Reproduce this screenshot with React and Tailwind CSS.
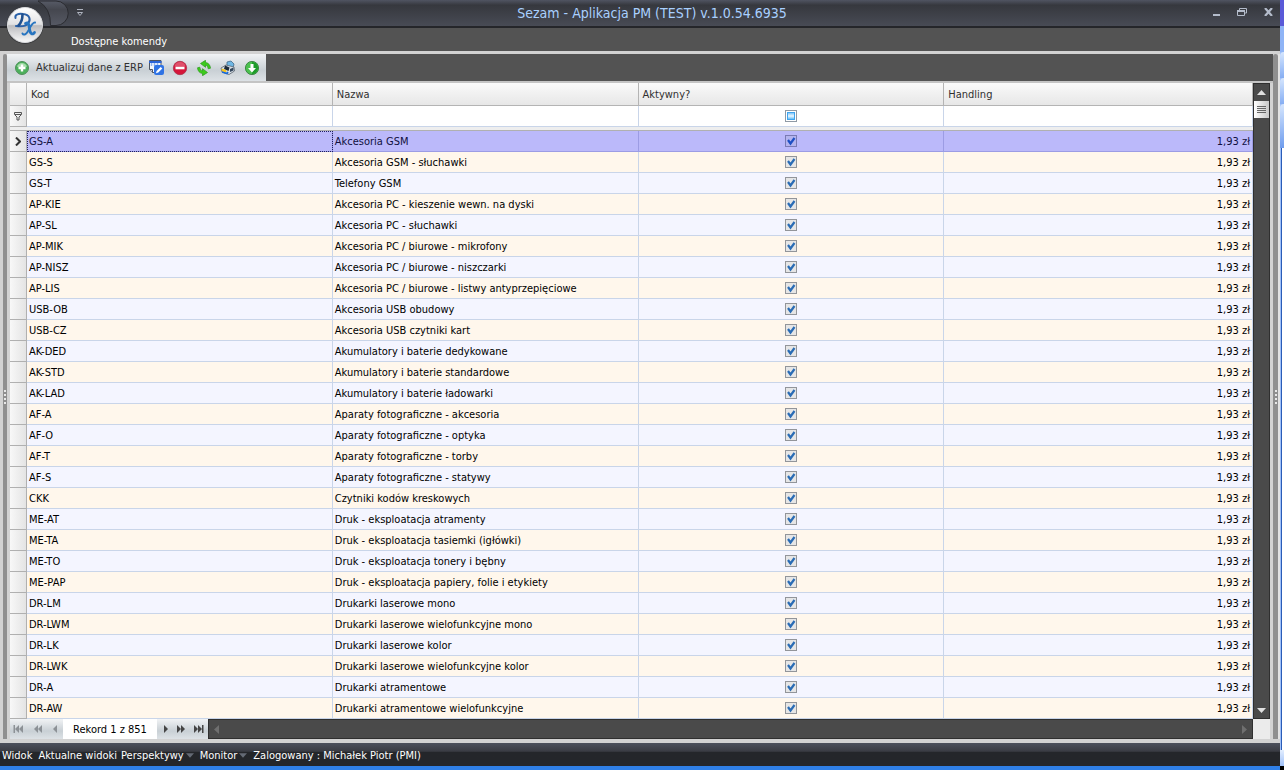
import React from 'react';

const rows = [
  ['GS-A', 'Akcesoria GSM'],
  ['GS-S', 'Akcesoria GSM - słuchawki'],
  ['GS-T', 'Telefony GSM'],
  ['AP-KIE', 'Akcesoria PC - kieszenie wewn. na dyski'],
  ['AP-SL', 'Akcesoria PC - słuchawki'],
  ['AP-MIK', 'Akcesoria PC / biurowe - mikrofony'],
  ['AP-NISZ', 'Akcesoria PC / biurowe - niszczarki'],
  ['AP-LIS', 'Akcesoria PC / biurowe - listwy antyprzepięciowe'],
  ['USB-OB', 'Akcesoria USB obudowy'],
  ['USB-CZ', 'Akcesoria USB czytniki kart'],
  ['AK-DED', 'Akumulatory i baterie dedykowane'],
  ['AK-STD', 'Akumulatory i baterie standardowe'],
  ['AK-LAD', 'Akumulatory i baterie ładowarki'],
  ['AF-A', 'Aparaty fotograficzne - akcesoria'],
  ['AF-O', 'Aparaty fotograficzne - optyka'],
  ['AF-T', 'Aparaty fotograficzne - torby'],
  ['AF-S', 'Aparaty fotograficzne - statywy'],
  ['CKK', 'Czytniki kodów kreskowych'],
  ['ME-AT', 'Druk - eksploatacja atramenty'],
  ['ME-TA', 'Druk - eksploatacja tasiemki (igłówki)'],
  ['ME-TO', 'Druk - eksploatacja tonery i bębny'],
  ['ME-PAP', 'Druk - eksploatacja papiery, folie i etykiety'],
  ['DR-LM', 'Drukarki laserowe mono'],
  ['DR-LWM', 'Drukarki laserowe wielofunkcyjne mono'],
  ['DR-LK', 'Drukarki laserowe kolor'],
  ['DR-LWK', 'Drukarki laserowe wielofunkcyjne kolor'],
  ['DR-A', 'Drukarki atramentowe'],
  ['DR-AW', 'Drukarki atramentowe wielofunkcyjne'],
];

const silver = 'bg-linear-to-b from-[#f1f3f5] via-[#c9d0d5] via-60% to-[#dde2e6]';

function Orb() {
  return (
    <svg width="40" height="40" viewBox="0 0 40 40" aria-hidden="true">
      <defs>
        <linearGradient id="orb" x1="0" y1="0" x2="0" y2="1">
          <stop offset="0" stopColor="#ffffff" />
          <stop offset="0.48" stopColor="#e2e2e4" />
          <stop offset="0.52" stopColor="#bcbcbf" />
          <stop offset="1" stopColor="#fafafa" />
        </linearGradient>
      </defs>
      <circle cx="20" cy="21.5" r="18.5" fill="#2c2d31" opacity="0.6" />
      <circle cx="20" cy="21" r="17.5" fill="url(#orb)" stroke="#d9dadd" />
      <g fill="none" strokeLinecap="round">
        <path d="M10.500 14C9.500 10 14 9.500 18 10C25 10.500 26 16 23 19.500C20.500 23 15 22.500 11 22" stroke="#2b61a8" strokeWidth="2" />
        <path d="M17.500 10.500C17.500 15 16 19 13.500 21.500" stroke="#20508f" strokeWidth="2.600" />
        <path d="M20.500 19.500C23.500 17.500 24 21 24.500 25C25 29.500 27.500 31.500 29.500 28.500" stroke="#2875c0" strokeWidth="2.800" />
        <path d="M30 18.500C27 18 25 24 22.500 28C21 30.500 18.500 31.500 17.500 29.500" stroke="#2875c0" strokeWidth="2" />
      </g>
    </svg>
  );
}

function AddIcon() {
  return (
    <svg width="16" height="16" viewBox="0 0 16 16" aria-hidden="true">
      <circle cx="8" cy="8" r="6.5" fill="#4cb05c" stroke="#4f8f5b" />
      <path d="M3 6.5a5.3 5.3 0 0 1 10 0Q8 9 3 6.5Z" fill="#a5dcaa" />
      <path d="M8 4.5v7M4.5 8h7" stroke="#fff" strokeWidth="2.4" />
    </svg>
  );
}

function EditIcon() {
  return (
    <svg width="16" height="16" viewBox="0 0 16 16" aria-hidden="true">
      <path d="M1.500 .5h11.500v12H4.500l-3-3Z" fill="#f4f7fc" stroke="#4d5562" />
      <path d="M1 1h12.500v2H1Z" fill="#2b65d9" />
      <path d="M3.500 3v3M6.500 3v3M9.500 3v2" stroke="#8fb3f0" strokeWidth="1.5" />
      <path d="M1.500 9.500h3v3" fill="#ccd" stroke="#4d5562" />
      <rect x="6" y="5" width="10" height="10" rx="2" fill="#2f73e4" />
      <path d="M8 13.300l.6-2.400 4-4 1.700 1.700-4 4Z" fill="#fff" />
    </svg>
  );
}

function RemoveIcon() {
  return (
    <svg width="16" height="16" viewBox="0 0 16 16" aria-hidden="true">
      <circle cx="8" cy="8" r="6.700" fill="#d5163a" stroke="#a8344c" strokeWidth=".8" />
      <path d="M2.500 6.500a5.600 5.600 0 0 1 11 0Z" fill="#e0506b" />
      <path d="M3.500 8h9" stroke="#fff" strokeWidth="2.600" />
    </svg>
  );
}

function RefreshIcon() {
  const half = 'M4.500 3.500 9.500 .3v2.200q4.500.7 5 5.700l-2.300.6Q12 5.500 9.500 5v2.300Z';
  return (
    <svg width="16" height="16" viewBox="0 0 16 16" aria-hidden="true">
      <g fill="#3ccb1c" stroke="#2a9a1b" strokeWidth=".7" strokeLinejoin="round">
        <path d={half} />
        <path d={half} transform="rotate(180 8 8)" />
      </g>
    </svg>
  );
}

function PrintIcon() {
  return (
    <svg width="16" height="16" viewBox="0 0 16 16" aria-hidden="true">
      <path d="m7 2 4-1 3 3-1 4H7Z" fill="#6fb7e4" stroke="#406a8c" strokeWidth=".8" />
      <path d="m1 8 5-3 8 2 .5 4L9 14.500 2 12Z" fill="#d7dee5" stroke="#59656f" strokeWidth=".8" />
      <path d="m5 5.500 4.500 2-1 3.500L4 9Z" fill="#1d2b38" />
      <path d="m10 9 3.500-1.500v3L10 12Z" fill="#33475c" />
      <path d="m1.500 8.500 4.500 1.500.5 2.500-4.500-1Z" fill="#f7c51e" />
      <path d="m2 12 5 1.500 1-1.500" fill="none" stroke="#1668d8" strokeWidth="1.600" />
    </svg>
  );
}

function DownloadIcon() {
  return (
    <svg width="16" height="16" viewBox="0 0 16 16" aria-hidden="true">
      <circle cx="8" cy="8" r="6.600" fill="#4bc14f" stroke="#35803e" strokeWidth=".9" />
      <path d="M8 2a6 6 0 0 1 0 12Z" fill="#1d9b29" />
      <path d="M6.500 4h3v4H12l-4 4.500L4 8h2.500Z" fill="#fff" />
    </svg>
  );
}

function NavIcon({ count, bar, left }) {
  const width = count * 4 + (bar ? 2 : 0);
  return (
    <svg width={width} height="8" viewBox={`0 0 ${width} 8`} aria-hidden="true">
      <g fill="currentColor" transform={left ? `translate(${width} 0) scale(-1 1)` : undefined}>
        <path d="M0 0v8l4-4Z" />
        {count > 1 && <path d="M4 0v8l4-4Z" />}
        {bar && <path d="M8 0h1.500v8H8Z" />}
      </g>
    </svg>
  );
}

function Arrow({ dir, className }) {
  const d = {
    up: 'M0 5 4.500 0 9 5Z',
    down: 'M0 0h9L4.500 5Z',
    left: 'M6 0v9L1 4.500Z',
    right: 'M1 0v9l5-4.500Z',
  }[dir];
  const tall = dir === 'left' || dir === 'right';
  return (
    <svg width={tall ? 7 : 9} height={tall ? 9 : 5} viewBox={tall ? '0 0 7 9' : '0 0 9 5'} className={className} aria-hidden="true">
      <path d={d} fill="currentColor" />
    </svg>
  );
}

function Check({ selected, label }) {
  return (
    <span className="mx-auto grid size-3">
      <input
        type="checkbox"
        defaultChecked
        aria-label={label}
        className={`col-start-1 row-start-1 size-3 appearance-none border ${
          selected ? 'border-[#7a7ab4] bg-[#b4b4ee]' : 'border-[#92959a] bg-[#e6e6e6]'
        }`}
      />
      <svg width="12" height="12" className="pointer-events-none col-start-1 row-start-1" aria-hidden="true">
        <path d="M3 5 5.500 8.500 9.500 3" fill="none" stroke={selected ? '#1e4fc4' : '#2a6cb5'} strokeWidth="2.200" />
      </svg>
    </span>
  );
}

function Grip() {
  return (
    <>
      <i className="size-0.5 bg-[#e8e8e8]" />
      <i className="size-0.5 bg-[#e8e8e8]" />
      <i className="size-0.5 bg-[#e8e8e8]" />
      <i className="size-0.5 bg-[#e8e8e8]" />
    </>
  );
}

function TitleBar() {
  return (
    <header className="relative">
      <div className="flex h-7 items-start border-b-2 border-[#25262a] bg-linear-to-b from-[#505462] from-0% via-[#36383e] via-20% to-[#484b55] to-100%">
        <svg width="69" height="26" aria-hidden="true">
          <defs>
            <linearGradient id="tab" x1="0" y1="0" x2="0" y2="1">
              <stop offset="0" stopColor="#575b67" />
              <stop offset="0.35" stopColor="#45474f" />
              <stop offset="1" stopColor="#565964" />
            </linearGradient>
          </defs>
          <path d="M38 1H56a12 12 0 0 1 0 24.500H50.500Q51 8 38 1Z" fill="url(#tab)" stroke="#2a2b30" />
        </svg>
        <button aria-label="Dostosuj pasek" className="ml-2 flex h-6 w-[6px] flex-col items-center justify-center gap-0.5 text-[#aeb3bf]">
          <i className="h-px w-[6px] bg-current" />
          <svg width="6" height="4" aria-hidden="true">
            <path d="M.5 .5h5L3 3.500Z" fill="none" stroke="currentColor" />
          </svg>
        </button>
        <h1 className="flex-1 pt-1 pl-2 text-center text-sm leading-[18px] text-[#a9d0ff]">
          Sezam - Aplikacja PM (TEST) v.1.0.54.6935
        </h1>
        <div className="flex h-6 items-center gap-[17px] pr-[7px] text-[#b4bccb]">
          <button aria-label="Minimalizuj" className="flex h-2 w-[7px] items-end">
            <i className="h-0.5 w-full bg-current" />
          </button>
          <button aria-label="Przywróć">
            <svg width="10" height="8" aria-hidden="true">
              <path d="M2.500 2V.5h7V5H8M.5 3h7v4.500h-7ZM.5 3h7" fill="none" stroke="currentColor" />
              <path d="M0 2h8v2H0Z" fill="currentColor" />
            </svg>
          </button>
          <button aria-label="Zamknij">
            <svg width="9" height="8" aria-hidden="true">
              <path d="m1 0 7 8M8 0 1 8" fill="none" stroke="currentColor" strokeWidth="2.200" />
            </svg>
          </button>
        </div>
      </div>
      <div className="flex h-[23px] items-center bg-[#535353] pt-1 pl-[71px] text-white">
        <button>Dostępne komendy</button>
      </div>
      <button aria-label="Menu aplikacji" className="absolute top-1 left-[5px]">
        <Orb />
      </button>
    </header>
  );
}

function Toolbar() {
  return (
    <div className="flex h-[27px] bg-[#535353]">
      <div className={`flex items-center gap-2 pr-1.5 pl-[7px] text-[#303030] ${silver}`}>
        <button className="-mr-[3px] flex items-center gap-1.5">
          <AddIcon />
          Aktualizuj dane z ERP
        </button>
        <button aria-label="Edytuj"><EditIcon /></button>
        <button aria-label="Usuń"><RemoveIcon /></button>
        <button aria-label="Odśwież"><RefreshIcon /></button>
        <button aria-label="Drukuj"><PrintIcon /></button>
        <button aria-label="Pobierz"><DownloadIcon /></button>
      </div>
    </div>
  );
}

const head = 'h-[23px] border-r border-b border-[#b4b4b4] bg-linear-to-b from-[#fafafa] to-[#e7e7e7] px-1 pt-0.5 text-left font-normal text-[#303030]';
const filter = 'h-5 border-r border-b border-[#c9d5e9] bg-white p-0';
const indicator = 'border-r border-b border-[#b0b0b0] bg-linear-to-r from-[#f8f8f8] to-[#e4e4e4] p-0';

function Grid() {
  return (
    <table className="w-full table-fixed border-separate border-spacing-0">
      <colgroup>
        <col className="w-[17px]" />
        <col className="w-[24.6%]" />
        <col className="w-[24.6%]" />
        <col className="w-[24.6%]" />
        <col />
      </colgroup>
      <thead>
        <tr>
          <th className={head} />
          <th className={head}>Kod</th>
          <th className={head}>Nazwa</th>
          <th className={head}>Aktywny?</th>
          <th className={head}>Handling</th>
        </tr>
        <tr>
          <td className={indicator}>
            <svg width="8" height="9" className="mx-auto" aria-hidden="true">
              <path d="M.5 .5h7v2L5 5v3H3V5L.5 2.500ZM1 2.500h6" fill="none" stroke="#555" />
            </svg>
          </td>
          <td className={filter}><input aria-label="Filtr: Kod" className="block h-5 w-full px-1 outline-none" /></td>
          <td className={filter}><input aria-label="Filtr: Nazwa" className="block h-5 w-full px-1 outline-none" /></td>
          <td className={filter}>
            <span className="mx-auto grid size-3">
              <input type="checkbox" aria-label="Filtr: Aktywny" className="col-start-1 row-start-1 size-3 appearance-none border border-[#8f9aa5] bg-white" />
              <i className="pointer-events-none col-start-1 row-start-1 m-0.5 border border-[#3fa4ee] bg-linear-to-b from-[#7cc6fa] via-[#eaf7ff] to-[#5fc0fa]" />
            </span>
          </td>
          <td className={filter}><input aria-label="Filtr: Handling" className="block h-5 w-full px-1 outline-none" /></td>
        </tr>
        <tr>
          <td colSpan={5} className="h-1 border-b border-[#b0b0b0] bg-[#eeeeee] p-0" />
        </tr>
      </thead>
      <tbody>
        {rows.map(([code, name], i) => {
          const selected = i === 0;
          const tone = selected
            ? 'border-[#9c9ce4] bg-[#bbb9fa] text-[#101040]'
            : i % 2
              ? 'border-[#c9d5e9] bg-[#fff7ec] text-black'
              : 'border-[#c9d5e9] bg-[#f4f5ff] text-black';
          const cell = `h-[21px] border-r border-b leading-[18px] whitespace-nowrap ${tone}`;
          return (
            <tr key={code} aria-selected={selected}>
              <td className={indicator}>
                {selected && (
                  <svg width="6" height="9" className="mx-auto" aria-hidden="true">
                    <path d="m1 .5 4 4-4 4" fill="none" stroke="#333" strokeWidth="2" />
                  </svg>
                )}
              </td>
              <td className={`${cell} px-0.5 pt-0.5 pb-0 ${selected ? 'outline-1 -outline-offset-1 outline-dotted outline-[#202060]' : ''}`}>{code}</td>
              <td className={`${cell} px-0.5 pt-0.5 pb-0`}>{name}</td>
              <td className={`${cell} p-0`}><Check selected={selected} label={`Aktywny: ${name}`} /></td>
              <td className={`${cell} px-0.5 pt-0.5 pb-0 text-right`}>1,93 zł</td>
            </tr>
          );
        })}
      </tbody>
    </table>
  );
}

function Navigator() {
  return (
    <div className="flex h-5">
      <div className={`flex shrink-0 ${silver}`}>
        <div className="flex w-[53px] items-center justify-between pr-1.5 pl-[3px] text-[#8c9196]">
          <button aria-label="Pierwszy"><NavIcon count={2} bar left /></button>
          <button aria-label="Poprzednia strona"><NavIcon count={2} left /></button>
          <button aria-label="Poprzedni"><NavIcon count={1} left /></button>
        </div>
        <div className="w-[94px] bg-white pt-0.5 text-center leading-[18px]">Rekord 1 z 851</div>
        <div className="flex w-[51px] items-center justify-between pr-1 pl-[7px] text-[#454545]">
          <button aria-label="Następny"><NavIcon count={1} /></button>
          <button aria-label="Następna strona"><NavIcon count={2} /></button>
          <button aria-label="Ostatni"><NavIcon count={2} bar /></button>
        </div>
      </div>
      <div className="flex flex-1 items-center justify-between border border-[#2f2f2f] bg-[#4a4a4a] px-1 text-[#6f6f6f]">
        <button aria-label="Przewiń w lewo"><Arrow dir="left" /></button>
        <button aria-label="Przewiń w prawo"><Arrow dir="right" /></button>
      </div>
    </div>
  );
}

function VerticalScroll() {
  return (
    <div className="flex w-[17px] shrink-0 flex-col bg-[#ebebeb] pb-5">
      <div className="flex flex-1 flex-col items-center border border-[#2f2f2f] bg-[#4a4a4a]">
        <button aria-label="Przewiń w górę" className="flex h-[17px] items-center text-[#e0e0e0]"><Arrow dir="up" /></button>
        <div className="flex h-[17px] w-[15px] flex-col items-center justify-center gap-px bg-linear-to-r from-white to-[#c8c8c8]">
          <i className="h-px w-[9px] bg-[#666]" />
          <i className="h-px w-[9px] bg-[#666]" />
          <i className="h-px w-[9px] bg-[#666]" />
          <i className="h-px w-[9px] bg-[#666]" />
        </div>
        <button aria-label="Przewiń w dół" className="mt-auto flex h-[15px] items-center text-[#e0e0e0]"><Arrow dir="down" /></button>
      </div>
    </div>
  );
}

function StatusBar() {
  return (
    <footer className="flex h-[23px] items-center bg-linear-to-b from-[#4c505c] from-0% via-[#3a3c43] via-36% to-[#24262a] to-40% px-0.5 pt-0.5 text-white">
      <button className="mr-1.5">Widok</button>
      <button className="mr-1">Aktualne widoki</button>
      <button className="mr-1.5 flex items-center gap-0.5">
        Perspektywy <Arrow dir="down" className="w-2 text-[#646a75]" />
      </button>
      <button className="mr-1.5 flex items-center gap-0.5">
        Monitor <Arrow dir="down" className="w-2 text-[#646a75]" />
      </button>
      <span>Zalogowany : Michałek Piotr (PMI)</span>
    </footer>
  );
}

function DesktopEdge() {
  return (
    <div className="flex w-1 shrink-0 flex-col bg-[#9fc0f8]">
      <div className="h-[26px] bg-[#5a5ad8]" />
      <div className="h-[26px] bg-[#8fb4f6]" />
      <div className="h-[26px] rounded-tl bg-linear-to-b from-[#d6e6fd] to-[#86aef3]" />
      <div className="h-[26px] rounded-tl bg-linear-to-b from-[#d6e6fd] to-[#86aef3]" />
      <div className="h-[44px] rounded-tl bg-linear-to-b from-[#d6e6fd] to-[#6f9ced]" />
      <div className="ml-px flex-1 border-l border-[#2a5cb8] bg-white" />
      <div className="h-4 bg-linear-to-b from-[#e3eefe] to-[#9fc0f8]" />
      <div className="h-1 bg-black" />
    </div>
  );
}

export default function App() {
  return (
    <div className="flex min-h-screen overflow-hidden font-['DejaVu_Sans_Condensed','DejaVu_Sans',sans-serif] text-[11px] leading-4">
      <div className="flex min-w-0 flex-1 flex-col bg-[#2f7fe6]">
        <TitleBar />
        <main className="flex border-t-3 border-b-4 border-[#d2d2d2] bg-[#d2d2d2] pl-[3px]">
          <div className="flex w-1 shrink-0 flex-col items-center justify-center gap-0.5 rounded-t-sm bg-[#8f8f8f]">
            <Grip />
          </div>
          <div className="flex min-w-0 flex-1 flex-col">
            <Toolbar />
            <div className="flex border-t-2 border-[#c4c4c4] px-[3px]">
              <div className="min-w-0 flex-1 bg-white">
                <Grid />
                <Navigator />
              </div>
              <VerticalScroll />
            </div>
          </div>
          <div className="flex w-[5px] shrink-0 flex-col items-center justify-center gap-0.5 rounded-t-sm bg-[#8f8f8f]">
            <Grip />
          </div>
          <div className="w-0.5 bg-[#e2e2e2]" />
        </main>
        <StatusBar />
      </div>
      <DesktopEdge />
    </div>
  );
}
